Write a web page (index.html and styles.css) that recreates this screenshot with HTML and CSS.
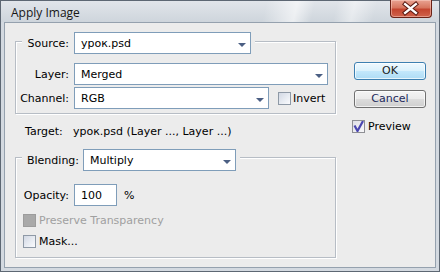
FILE: index.html
```html
<!DOCTYPE html>
<html lang="ru">
  <head>
    <meta charset="UTF-8" />
    <title>Apply Image</title>
    <link rel="stylesheet" href="styles.css">
  </head>
  <body>
    <div class="window">
      <div class="titlebar">
        <span class="title">Apply Image</span>
        <span class="close">
          <svg width="42" height="18" viewBox="0 0 42 18">
            <path d="M15.5 4 L26.5 13 M26.5 4 L15.5 13" stroke="#5a1a12" stroke-width="4.5" stroke-linecap="square" />
            <path d="M15.5 4 L26.5 13 M26.5 4 L15.5 13" stroke="#fff" stroke-width="2.5" stroke-linecap="square" />
          </svg>
        </span>
      </div>
      <div class="client">
        <div class="main">
          <div class="group group-source">
            <div class="group-head">
              <span class="head-label lbl-source">Source:</span>
              <div class="select w-source"><span>урок.psd</span><i class="arrow"></i></div>
            </div>
            <div class="row row-first">
              <span class="label">Layer:</span>
              <div class="select w-layer"><span>Merged</span><i class="arrow"></i></div>
            </div>
            <div class="row row-next">
              <span class="label">Channel:</span>
              <div class="select w-channel"><span>RGB</span><i class="arrow"></i></div>
              <span class="check check-invert"><span class="box"></span>Invert</span>
            </div>
          </div>

          <div class="target">
            <span class="target-label">Target:</span>
            <span>урок.psd (Layer ..., Layer ...)</span>
          </div>

          <div class="group group-blend">
            <div class="group-head">
              <span class="head-label lbl-blend">Blending:</span>
              <div class="select w-blend"><span>Multiply</span><i class="arrow"></i></div>
            </div>
            <div class="row row-opacity">
              <span class="label">Opacity:</span>
              <div class="field">100</div>
              <span class="unit">%</span>
            </div>
            <div class="check check-row check-preserve disabled">
              <span class="box"></span>Preserve Transparency
            </div>
            <div class="check check-row check-mask">
              <span class="box"></span>Mask...
            </div>
          </div>
        </div>

        <div class="side">
          <button class="btn btn-default">OK</button>
          <button class="btn btn-cancel">Cancel</button>
          <div class="check check-preview">
            <span class="box checked">
              <svg width="11" height="11" viewBox="0 0 11 11">
                <polyline points="1.5,4.5 4.5,10 10,0" fill="none" stroke="#4a46b0" stroke-width="2.2" />
              </svg>
            </span>Preview
          </div>
        </div>
      </div>
    </div>
  </body>
</html>
```

FILE: styles.css
```css
html,
body {
  margin: 0;
}
body {
  font-family: 'DejaVu Sans', sans-serif;
  font-size: 11px;
  color: #000;
  background: #fff;
}
.window {
  width: 440px;
  height: 272px;
  box-sizing: border-box;
  border: 1px solid #5d6773;
  display: flex;
  flex-direction: column;
  background: #d3d9e0;
}
.titlebar {
  height: 21px;
  flex: none;
  display: flex;
  align-items: flex-start;
  padding-left: 10px;
  background:
    linear-gradient(103deg, rgba(255, 255, 255, 0) 60%, rgba(255, 255, 255, 0.6) 67%, rgba(255, 255, 255, 0) 71%, rgba(255, 255, 255, 0) 76%, rgba(255, 255, 255, 0.45) 80%, rgba(255, 255, 255, 0) 85%),
    linear-gradient(#e1e5ea, #ced5dc);
}
.title {
  margin-top: 4px;
  line-height: 16px;
  font-family: 'Open Sans', sans-serif;
  font-size: 12px;
  color: #161616;
}
.close {
  margin: -1px 7px 0 auto;
  width: 42px;
  height: 18px;
  box-sizing: border-box;
  border: 1px solid #6b2216;
  border-top: none;
  border-radius: 0 0 4px 4px;
  background: linear-gradient(#e9a392 0%, #d7765f 45%, #c4452f 55%, #d0634c 100%);
  box-shadow: inset 0 0 0 1px rgba(255, 220, 210, 0.45);
  display: flex;
}
.close svg {
  margin-left: -1px;
}
.client {
  flex: 1;
  margin: 0 3px 3px 3px;
  border: 1px solid #95a1ae;
  background: #ececec;
  display: flex;
  padding: 18px 0 0 10px;
}
.main {
  width: 321px;
  display: flex;
  flex-direction: column;
}
.group {
  box-sizing: border-box;
  width: 321px;
  border: 1px solid #b7bdc5;
  box-shadow: inset 1px 1px 0 #fff, 1px 1px 0 #fff;
  display: flex;
  flex-direction: column;
  align-items: flex-start;
}
.group-source {
  padding-bottom: 4px;
}
.group-blend {
  margin-top: 18px;
  padding-bottom: 8px;
}
.group-head {
  display: flex;
  align-items: center;
  margin-left: 6px;
  padding: 0 4px 0 5px;
  background: #ececec;
}
.group-source .group-head {
  margin-top: -10px;
}
.group-blend .group-head {
  margin-top: -9px;
}
.head-label {
  text-align: right;
  white-space: nowrap;
  margin-right: 5px;
}
.lbl-source {
  width: 42px;
}
.lbl-blend {
  width: 51px;
}
.row {
  display: flex;
  align-items: center;
}
.row-first {
  margin-top: 9px;
}
.row-next {
  margin-top: 2px;
}
.row-opacity {
  margin-top: 13px;
}
.label {
  width: 53px;
  text-align: right;
  margin-right: 5px;
  white-space: nowrap;
}
.select,
.field {
  height: 22px;
  box-sizing: border-box;
  border: 1px solid #7f9db9;
  background: #fff;
  padding: 0 4px 0 6px;
  display: flex;
  align-items: center;
  justify-content: space-between;
  white-space: nowrap;
}
.arrow {
  width: 0;
  height: 0;
  margin-top: 3px;
  border-left: 4px solid transparent;
  border-right: 4px solid transparent;
  border-top: 4px solid #4b5f83;
}
.w-source {
  width: 177px;
}
.w-layer {
  width: 254px;
}
.w-channel {
  width: 195px;
}
.w-blend {
  width: 153px;
}
.field {
  width: 43px;
}
.unit {
  margin-left: 7px;
}
.check {
  display: flex;
  align-items: center;
  white-space: nowrap;
}
.box {
  width: 13px;
  height: 13px;
  box-sizing: border-box;
  border: 1px solid #8e99a6;
  background: linear-gradient(135deg, #d2d8e4 0%, #eef1f6 70%, #fbfbfd 100%);
  margin-right: 3px;
  display: flex;
  align-items: center;
  justify-content: center;
}
.check-invert {
  margin-left: 9px;
}
.check-invert .box {
  margin-right: 2px;
}
.check-row {
  height: 16px;
  padding-left: 7px;
}
.check-preserve {
  margin-top: 6px;
}
.check-mask {
  margin-top: 5px;
}
.disabled {
  color: #a0a0a0;
}
.disabled .box {
  border-color: #9c9c9c;
  background: #a9a9a9;
}
.target {
  margin-top: 11px;
  line-height: 14px;
  padding-left: 10px;
  display: flex;
}
.target-label {
  width: 48px;
}
.side {
  margin-left: 18px;
  width: 72px;
  padding-top: 21px;
  display: flex;
  flex-direction: column;
}
.btn {
  display: block;
  width: 72px;
  height: 18px;
  box-sizing: border-box;
  padding: 0;
  font: inherit;
  line-height: 14px;
  border: 1px solid #707070;
  border-radius: 3px;
  background: linear-gradient(#f4f4f4 0%, #ebebeb 48%, #dcdcdc 52%, #cfcfcf 100%);
  box-shadow: inset 0 0 0 1px rgba(255, 255, 255, 0.7);
  color: #1d2a5c;
}
.btn-default {
  border-color: #3c7fb1;
  background: linear-gradient(#eef8fe 0%, #dbf1fc 48%, #c3e7fb 52%, #aedcf5 100%);
  color: #1c1c1c;
}
.btn-cancel {
  margin-top: 10px;
}
.check-preview {
  margin: 12px 0 0 -2px;
  height: 13px;
}
.checked {
  border-color: #8e8f94;
  background: linear-gradient(135deg, #e0e0e6, #f7f7f9);
}
```
